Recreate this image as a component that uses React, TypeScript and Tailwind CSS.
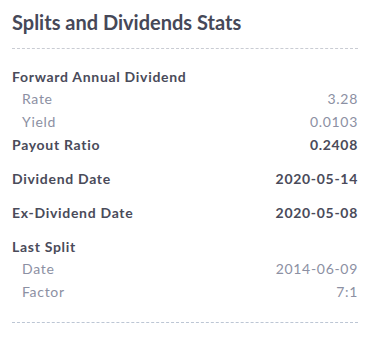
type Row = { label: string; value?: string; sub?: { label: string; value: string }[]; mt: string };

const rows: Row[] = [
  {
    label: "Forward Annual Dividend",
    mt: "mt-0",
    sub: [
      { label: "Rate", value: "3.28" },
      { label: "Yield", value: "0.0103" },
    ],
  },
  { label: "Payout Ratio", value: "0.2408", mt: "mt-[1px]" },
  { label: "Dividend Date", value: "2020-05-14", mt: "mt-[12px]" },
  { label: "Ex-Dividend Date", value: "2020-05-08", mt: "mt-[12px]" },
  {
    label: "Last Split",
    mt: "mt-[12px]",
    sub: [
      { label: "Date", value: "2014-06-09" },
      { label: "Factor", value: "7:1" },
    ],
  },
];

export default function App() {
  return (
    <div className="bg-white w-[375px] h-[344px] pl-3 pr-[17px] font-['Lato',sans-serif]">
      <h2 className="pt-[9px] pb-[13px] text-[20px] font-bold text-[#464858] leading-[26px]">
        Splits and Dividends Stats
      </h2>
      <div className="border-t border-dashed border-[#c9ccd3]" />
      <div className="pt-[17px] flex flex-col">
        {rows.map((r) => (
          <div key={r.label} className={`flex flex-col ${r.mt}`}>
            <div className="flex justify-between text-[14px] tracking-[0.7px] font-bold text-[#4a4b5a] leading-[22px]">
              <span>{r.label}</span>
              {r.value && <span>{r.value}</span>}
            </div>
            {r.sub?.map((s) => (
              <div
                key={s.label}
                className="flex justify-between pl-[10px] text-[14px] tracking-[0.7px] text-[#8c90a3] leading-[22.5px]"
              >
                <span>{s.label}</span>
                <span>{s.value}</span>
              </div>
            ))}
          </div>
        ))}
      </div>
      <div className="mt-[19px] border-t border-dashed border-[#bcc6d4]" />
    </div>
  );
}
